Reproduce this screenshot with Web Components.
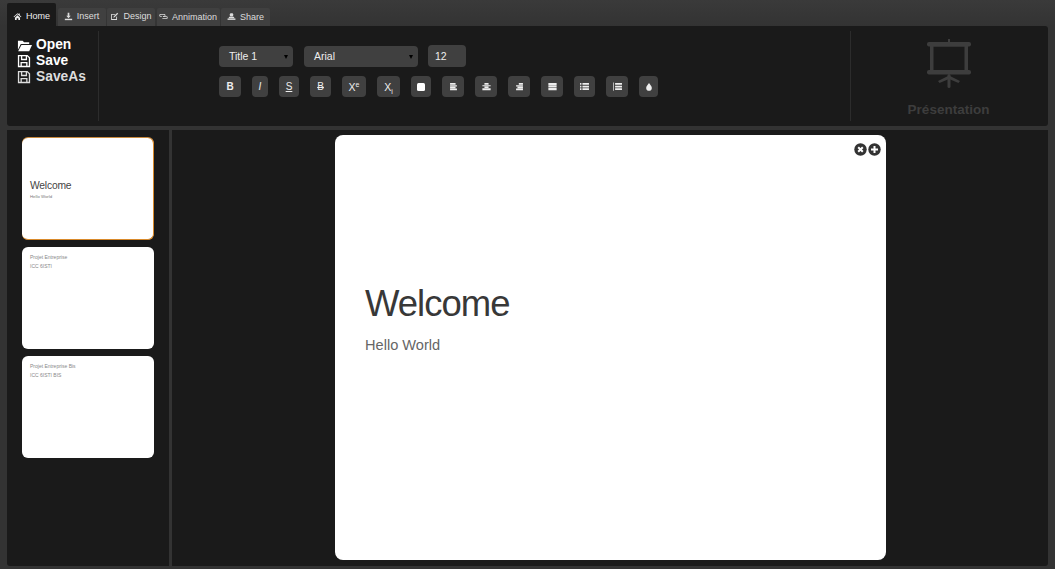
<!DOCTYPE html>
<html lang="en">
<head>
<meta charset="utf-8">
<title>Présentation</title>
<style>
  html, body { margin: 0; height: 100%; overflow: hidden; }
  body { background: #333; font-family: "Liberation Sans", Arial, sans-serif; }
</style>
</head>
<body>
<app-shell>
  <rib-tabs slot="tabs"></rib-tabs>
  <rib-bar slot="ribbon"></rib-bar>
  <slide-list slot="side">
    <slide-thumb selected title-text="Welcome" sub-text="Hello World"></slide-thumb>
    <slide-thumb line-one="Projet Entreprise" line-two="ICC 6ISTI"></slide-thumb>
    <slide-thumb line-one="Projet Entreprise Bis" line-two="ICC 6ISTI BIS"></slide-thumb>
  </slide-list>
  <slide-stage slot="main"></slide-stage>
</app-shell>

<script>
// Icon paths, drawn on a 16x16 box
const ICONS = {
  home: '<path d="M8 2 1 8.500l1 1L8 4l6 5.500 1-1-3-2.800V2.500h-2v1.400z"/><path d="M3.500 10 8 5.800l4.500 4.200V14H9.500v-3h-3v3h-3z"/>',
  insert: '<path d="M6.500 1.500h3v5H12L8 11 4 6.500h2.500z"/><rect x="1.500" y="12" width="13" height="2.500"/>',
  design: '<path d="M2 3.500h8l-1.500 1.500H3.500v7.500H11V9l1.500-1.500V14H2z"/><path d="M13 1.500l1.500 1.500L8 9.500 6 10l.5-2z"/>',
  link: '<path d="M3 3.500h6a2.500 2.500 0 0 1 0 5H7V7h2a1 1 0 0 0 0-2H3a1 1 0 0 0 0 2h2v1.500H3a2.500 2.500 0 0 1 0-5z"/><path d="M7 7.500h6a2.500 2.500 0 0 1 0 5H7a2.500 2.500 0 0 1-1-.2V11h7a1 1 0 0 0 0-2H7z"/>',
  share: '<rect x="5" y="2" width="6" height="6" rx="2"/><path d="M4 8.500h8l1.500 2.500h-11z"/><rect x="1" y="11.500" width="14" height="2.500"/>',
  open: '<path d="M1 3h5l1.500 1.500H13V6.500H4L1 12.500z"/><path d="M4.700 7.500H16l-3 6.500H1.200z"/>',
  save: '<path fill-rule="evenodd" d="M1 1h11l3 3v11H1zM2.500 2.500v11h1.500V9h8v4.500h1.500V4.700L11.500 2.700V7h-7V2.500zM6 2.500V5.500h4v-3zM5.500 10.500v3h5v-3z"/>',
  alignLeft: '<path d="M3 3h8v2.500H3zM3 6h10v2H3zM3 8.500h8v2H3zM3 11h10v2.500H3z"/>',
  alignCenter: '<path d="M5 3h6v2.500H5zM2 6h12v1.800H2zM5 8h6v2H5zM2 10.500h12v3H2z"/>',
  alignRight: '<path d="M7 3h6v2.500H7zM3 6h10v2H3zM5 8.500h8v2H5zM3 11h10v2.500H3z"/>',
  justify: '<path d="M2 3h12v3H2zM2 6.500h12v3H2zM2 10h12v3.500H2z"/>',
  list: '<path d="M1.500 3h2v2.500h-2zM1.500 6.800h2v2.500h-2zM1.500 10.500h2V13h-2zM5 3h9.500v2.500H5zM5 6.800h9.500v2.500H5zM5 10.500h9.500V13H5z"/>',
  olist: '<path d="M1.500 2h1v12h-1zM4.500 3h10v2.500h-10zM4.500 6.800h10v2.500h-10zM4.500 10.500h10V13h-10z"/>',
  drop: '<path fill-rule="evenodd" d="M8 1.500c2.500 3.500 4.500 5.500 4.500 8a4.500 4.500 0 0 1-9 0c0-2.500 2-4.500 4.500-8z"/>'
};

const svgIcon = (name, size, color) =>
  `<svg xmlns="http://www.w3.org/2000/svg" width="${size}" height="${size}" viewBox="0 0 16 16" fill="${color || "currentColor"}">${ICONS[name]}</svg>`;

class AppShell extends HTMLElement {
  constructor() {
    super();
    this.attachShadow({ mode: "open" });
    this.shadowRoot.innerHTML = `
      <style>
        :host {
          display: grid;
          grid-template-columns: 162px 876px;
          grid-template-rows: 23px 100px 436px;
          column-gap: 3px;
          row-gap: 0;
          padding: 3px 0 0 7px;
          height: 566px;
          box-sizing: border-box;
          background: linear-gradient(#3a3a3a, #333 26px);
        }
        .tabs { grid-column: 1 / 3; }
        .ribbon { grid-column: 1 / 3; }
        .side { margin-top: 4px; height: 436px; }
        .main { margin-top: 4px; height: 436px; }
      </style>
      <div class="tabs"><slot name="tabs"></slot></div>
      <div class="ribbon"><slot name="ribbon"></slot></div>
      <div class="side"><slot name="side"></slot></div>
      <div class="main"><slot name="main"></slot></div>
    `;
  }
}

class RibTabs extends HTMLElement {
  constructor() {
    super();
    this.attachShadow({ mode: "open" });
    const tabs = [
      ["home", "Home", 49, true],
      ["insert", "Insert", 48],
      ["design", "Design", 48],
      ["link", "Annimation", 63],
      ["share", "Share", 49]
    ];
    this.shadowRoot.innerHTML = `
      <style>
        :host { display: flex; align-items: flex-end; height: 23px; gap: 1.500px; }
        .tab {
          display: flex;
          align-items: center;
          justify-content: center;
          gap: 4px;
          height: 18px;
          background: #404040;
          color: #ddd;
          font-size: 9px;
          border-radius: 2px 2px 0 0;
          box-sizing: border-box;
          padding-bottom: 1px;
        }
        .tab.active { height: 23px; background: #1a1a1a; color: #eee; padding: 3px 0 0; }
        .tab:nth-child(3) span, .tab:nth-child(4) span { position: relative; top: -1px; }
      </style>
      ${tabs.map(([icon, label, w, active]) => `
        <div class="tab ${active ? "active" : ""}" style="width:${w}px">
          ${svgIcon(icon, 9)}<span>${label}</span>
        </div>`).join("")}
    `;
  }
}

class RibBar extends HTMLElement {
  constructor() {
    super();
    this.attachShadow({ mode: "open" });
    const files = [
      ["open", "Open", "#fff", 15],
      ["save", "Save", "#fff", 14],
      ["save", "SaveAs", "#ddd", 14]
    ];
    const tools = [
      ["B", 22, "font-weight:700"],
      ["I", 16, "font-style:italic"],
      ["S", 20, "text-decoration:underline"],
      ["B", 21, "text-decoration:line-through"],
      ["X<sup>e</sup>", 24, "font-size:10.500px"],
      ["X<sub>i</sub>", 23, "font-size:10.500px"]
    ];
    const iconTools = [
      ["square", 20], ["alignLeft", 22], ["alignCenter", 22], ["alignRight", 22],
      ["justify", 22], ["list", 21], ["olist", 22], ["drop", 19]
    ];
    this.shadowRoot.innerHTML = `
      <style>
        :host {
          display: flex;
          height: 100px;
          background: #1a1a1a;
          border-radius: 0 3px 3px 3px;
          color: #fff;
        }
        .files {
          width: 92px;
          height: 90px;
          margin-top: 5px;
          box-sizing: border-box;
          border-right: 1px solid #2c2c2c;
          padding: 6px 0 0 10px;
          font-size: 13.800px;
          font-weight: 700;
          line-height: 16px;
        }
        .file { display: flex; align-items: center; }
        .file .ic { width: 19px; display: flex; }
        .tools { width: 751px; padding: 20px 0 0 120px; box-sizing: border-box; }
        .row { display: flex; }
        .row.one { gap: 11px; height: 21px; }
        .row.two { gap: 11px; margin-top: 9px; }
        .field {
          box-sizing: border-box;
          height: 21px;
          border-radius: 4px;
          background: #404040;
          font-size: 10.500px;
          color: #eee;
          display: flex;
          align-items: center;
          padding: 0 0 2px 10px;
          position: relative;
        }
        .field.num { height: 22px; margin: -1px 0 0 -1px; padding: 0 0 1px 7px; }
        .field.sel::after {
          content: "";
          position: absolute;
          right: 5px;
          top: 9px;
          border: 2px solid transparent;
          border-top: 4px solid #000;
          border-bottom: 0;
        }
        .btn {
          box-sizing: border-box;
          height: 21px;
          border-radius: 4px;
          background: #404040;
          color: #eee;
          font-size: 10px;
          display: flex;
          align-items: center;
          justify-content: center;
        }
        sup, sub { font-size: 7px; line-height: 0; }
        .box { width: 8px; height: 8px; background: #fff; border-radius: 1.500px; }
        .about {
          flex: 1;
          height: 90px;
          margin-top: 5px;
          box-sizing: border-box;
          border-left: 1px solid #2c2c2c;
          display: flex;
          flex-direction: column;
          align-items: center;
          color: #3d3d3d;
          font-size: 13.500px;
          font-weight: 700;
          padding: 8px 2px 0 0;
        }
        .about svg { display: block; margin-bottom: 13px; }
      </style>
      <div class="files">
        ${files.map(([icon, label, color, size]) => `
          <div class="file" style="color:${color}"><span class="ic">${svgIcon(icon, size)}</span><span>${label}</span></div>`).join("")}
      </div>
      <div class="tools">
        <div class="row one">
          <div class="field sel" style="width:74px">Title 1</div>
          <div class="field sel" style="width:114px">Arial</div>
          <div class="field num" style="width:38px">12</div>
        </div>
        <div class="row two">
          ${tools.map(([t, w, css]) => `<div class="btn" style="width:${w}px;${css}"><span>${t}</span></div>`).join("")}
          ${iconTools.map(([name, w]) => `<div class="btn" style="width:${w}px">${name === "square" ? '<div class="box"></div>' : svgIcon(name, name === "drop" ? 10 : 11)}</div>`).join("")}
        </div>
      </div>
      <div class="about">
        <svg xmlns="http://www.w3.org/2000/svg" width="46" height="50" viewBox="0 0 46 50" fill="#3d3d3d">
          <rect x="22" y="0" width="2" height="4"/>
          <rect x="1" y="3" width="44" height="4.500" rx="2"/>
          <path fill-rule="evenodd" d="M4 6h38v28H4zM7.500 7.500v24h31v-24z"/>
          <rect x="1" y="31" width="44" height="4.500" rx="2"/>
          <rect x="21.500" y="35" width="3" height="14" rx="1.500"/>
          <path d="M23 36.500 34 42l-1.500 2L23 40l-9.500 4L12 42z"/>
        </svg>
        <div>Présentation</div>
      </div>
    `;
  }
}

class SlideList extends HTMLElement {
  constructor() {
    super();
    this.attachShadow({ mode: "open" });
    this.shadowRoot.innerHTML = `
      <style>
        :host {
          display: flex;
          flex-direction: column;
          gap: 7px;
          height: 436px;
          box-sizing: border-box;
          background: #1a1a1a;
          border-radius: 0 0 0 3px;
          padding: 8px 0 0 15px;
        }
      </style>
      <slot></slot>
    `;
  }
}

class SlideThumb extends HTMLElement {
  constructor() {
    super();
    this.attachShadow({ mode: "open" });
  }

  connectedCallback() {
    const title = this.getAttribute("title-text");
    const sub = this.getAttribute("sub-text");
    const one = this.getAttribute("line-one");
    const two = this.getAttribute("line-two");
    this.shadowRoot.innerHTML = `
      <style>
        :host {
          display: flex;
          flex-direction: column;
          box-sizing: border-box;
          width: 132px;
          height: 102px;
          background: #fff;
          border-radius: 6px;
          padding: 6px 0 0 8px;
        }
        :host([selected]) {
          justify-content: center;
          padding-top: 0;
          border-right: 1px solid #d98a2b;
          border-bottom: 1px solid #d98a2b;
          box-shadow: 0 -1px 0 #c98a3e;
        }
        .t { font-size: 10.300px; color: #444; letter-spacing: -.2px; line-height: 12px; margin-top: 2px; }
        .s { font-size: 4.300px; color: #777; line-height: 6px; margin-top: 2px; }
        .l { font-size: 5px; color: #888; line-height: 9px; }
      </style>
      ${title
        ? `<div class="t">${title}</div><div class="s">${sub}</div>`
        : `<div class="l">${one}</div><div class="l">${two}</div>`}
    `;
  }
}

class SlideStage extends HTMLElement {
  constructor() {
    super();
    this.attachShadow({ mode: "open" });
    this.shadowRoot.innerHTML = `
      <style>
        :host {
          display: flex;
          justify-content: center;
          height: 436px;
          box-sizing: border-box;
          background: #1a1a1a;
          border-radius: 0 0 3px 0;
          padding: 5px 0 0 1px;
        }
        .page {
          position: relative;
          box-sizing: border-box;
          width: 551px;
          height: 425px;
          background: #fff;
          border-radius: 8px;
          padding: 145px 30px 0;
        }
        h1 { margin: 0; font-size: 36.500px; font-weight: 400; line-height: 48px; color: #383838; letter-spacing: -1px; }
        p { margin: 7px 0 0; font-size: 14.600px; line-height: 20px; color: #666; }
        .ctl { position: absolute; top: 8px; right: 5px; display: flex; gap: 1px; }
      </style>
      <div class="page">
        <div class="ctl">
          <svg xmlns="http://www.w3.org/2000/svg" width="13" height="13" viewBox="0 0 13 13"><circle cx="6.500" cy="6.500" r="6.200" fill="#333"/><path d="M4.200 4.200l4.600 4.600M8.800 4.200 4.200 8.800" stroke="#fff" stroke-width="2"/></svg>
          <svg xmlns="http://www.w3.org/2000/svg" width="13" height="13" viewBox="0 0 13 13"><circle cx="6.500" cy="6.500" r="6.200" fill="#333"/><path d="M6.500 3v7M3 6.500h7" stroke="#fff" stroke-width="2"/></svg>
        </div>
        <h1>Welcome</h1>
        <p>Hello World</p>
      </div>
    `;
  }
}

customElements.define("app-shell", AppShell);
customElements.define("rib-tabs", RibTabs);
customElements.define("rib-bar", RibBar);
customElements.define("slide-list", SlideList);
customElements.define("slide-thumb", SlideThumb);
customElements.define("slide-stage", SlideStage);
</script>
</body>
</html>
